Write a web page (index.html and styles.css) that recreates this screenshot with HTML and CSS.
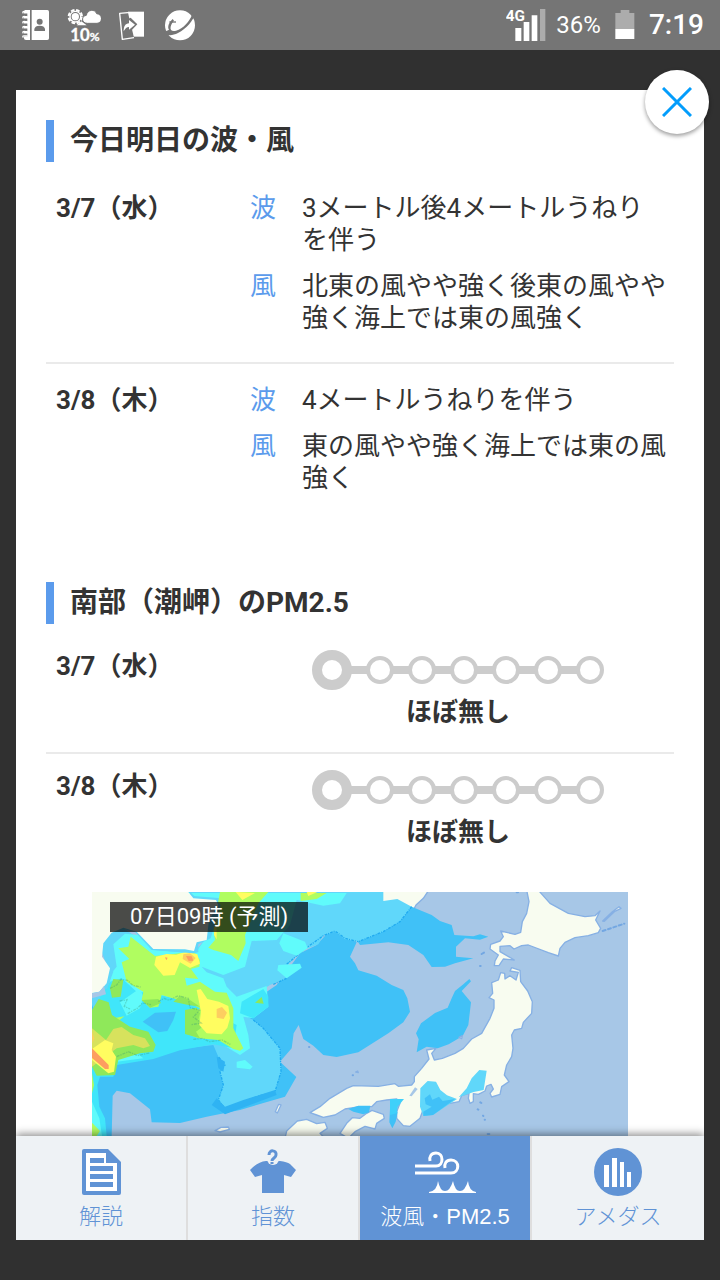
FILE: index.html
```html
<!DOCTYPE html>
<html lang="ja">
<head>
    <meta charset="UTF-8">
    <meta name="viewport" content="width=device-width, initial-scale=1.0">
    <title>波風・PM2.5</title>
    <link rel="stylesheet" href="styles.css">
</head>
<body>
  <header class="status-bar">
    <svg class="w28" viewBox="63 0 84 150" aria-hidden="true">
      <path fill="#fff" d="M78 30h12v90H78c-4 0-6-2-6-6V36c0-4 2-6 6-6zM95 30h47q5 0 5 5v80q0 5-5 5H95z"/>
      <path fill="none" stroke="#757575" stroke-width="9" d="M68 45h14M68 60h14M68 75h14M68 90h14M68 105h14"/>
      <path fill="none" stroke="#fff" stroke-width="4" d="M70 40q-5-7 6-5h7M70 55q-5-7 6-5h7M70 70q-5-7 6-5h7M70 85q-5-7 6-5h7M70 100q-5-7 6-5h7M70 113q-5-7 6-5h7"/>
      <circle cx="119" cy="65" r="9" fill="#757575"/>
      <path fill="#757575" d="M103 93v-6q2-10 16-10t16 10v6z"/>
    </svg>
    <svg class="w34" viewBox="201 0 102 150" aria-hidden="true">
      <circle cx="226" cy="50" r="20" fill="none" stroke="#fff" stroke-width="6" stroke-dasharray="11 5"/>
      <circle cx="226" cy="50" r="16" fill="none" stroke="#fff" stroke-width="4"/>
      <circle cx="226" cy="50" r="11" fill="#fff"/>
      <path fill="#fff" stroke="#757575" stroke-width="3" d="M262 70c-18 0-19-22-3-24 3-18 26-20 31-5 19 1 19 28 1 29z"/>
      <path fill="#fff" d="M230 76l14-12 16 12z"/>
      <text class="rain" x="211" y="124">10<tspan class="rain-unit">%</tspan></text>
    </svg>
    <svg class="w26" viewBox="357 0 78 150" aria-hidden="true">
      <path fill="#fff" d="M384 35h48v75h-48z"/>
      <path fill="#757575" stroke="#fff" stroke-width="4" stroke-linejoin="round" d="M384 38l-25 2 8 78 35-5"/>
      <path fill="#757575" d="M384 57l8-4 20 20-20 21-8-4z"/>
      <path fill="#fff" d="M371 94c0-15 5-23 16-24V60l18 14-18 15v-8c-7 0-11 4-16 13z"/>
    </svg>
    <svg class="w34" viewBox="489 0 102 150" aria-hidden="true">
      <circle cx="540" cy="76" r="45" fill="#fff"/>
      <path fill="#757575" d="M491 92c6 17 24 16 43 7 26-13 46-37 52-59l-7-6c-5 23-21 45-43 55-16 7-27 4-24-9 2-8 5-13 10-18l-4-5c-10 9-17 23-11 32-6 4-12 6-16 3z"/>
      <path fill="none" stroke="#757575" stroke-width="4" d="M508 66h20"/>
    </svg>
    <span class="spacer"></span>
    <svg class="w40 signal" viewBox="86 0 120 150" role="img" aria-label="4G">
      <path fill="#fff" d="M114 84h18v39h-18zM139 66h17v57h-17zM163 46h17v77h-17z"/>
      <path fill="#acacac" d="M188 27h16v96h-16z"/>
      <text class="network" x="85" y="62">4G</text>
    </svg>
    <span class="percent">36%</span>
    <svg class="w20 battery" viewBox="407 0 60 150" aria-hidden="true">
      <path fill="#acacac" d="M424 30h26v9h15v49h-57V39h16z"/>
      <path fill="#fff" d="M408 87h57v30h-57z"/>
    </svg>
    <time class="clock">7:19</time>
  </header>

  <div class="overlay">
    <button class="close" type="button" aria-label="閉じる">
      <svg viewBox="0 0 30 30" aria-hidden="true"><path d="M1 1l28 28M29 1L1 29"/></svg>
    </button>
    <div class="sheet">
      <main class="content">
        <section class="forecast">
          <h2>今日明日の波・風</h2>
          <div class="day">
            <h3>3/7（水）</h3>
            <dl>
              <dt>波</dt>
              <dd>3メートル後4メートルうねりを伴う</dd>
              <dt>風</dt>
              <dd>北東の風やや強く後東の風やや強く海上では東の風強く</dd>
            </dl>
          </div>
          <div class="day">
            <h3>3/8（木）</h3>
            <dl>
              <dt>波</dt>
              <dd>4メートルうねりを伴う</dd>
              <dt>風</dt>
              <dd>東の風やや強く海上では東の風強く</dd>
            </dl>
          </div>
        </section>

        <section class="pm">
          <h2>南部（潮岬）のPM2.5</h2>
          <div class="pm-day">
            <h3>3/7（水）</h3>
            <div class="level">
              <div class="scale"><i class="on"></i><i></i><i></i><i></i><i></i><i></i><i></i></div>
              <p>ほぼ無し</p>
            </div>
          </div>
          <div class="pm-day">
            <h3>3/8（木）</h3>
            <div class="level">
              <div class="scale"><i class="on"></i><i></i><i></i><i></i><i></i><i></i><i></i></div>
              <p>ほぼ無し</p>
            </div>
          </div>
        </section>

        <figure class="map">
          <figcaption>07日09時 (予測)</figcaption>
          <svg viewBox="6 21 1608 1200" aria-hidden="true">
            <path fill="#a7c7e7" d="M6 21h1608v1200H6z"/>
            <path class="land" d="M840 10H1020L1000 40 978 60 965 85 860 80z"/>
            <!-- sea of japan and yellow sea -->
            <path fill="#40c1f7" d="M0 325L60 300 300 330 450 375 560 300 630 205 680 180 712 145 740 135 755 155 785 165 800 172 780 215 795 235 805 256 860 272 905 300 940 315 952 340 960 380 940 412 895 445 805 502 740 516 700 510 670 482 640 462 626 420 611 445 605 490 570 530 619 576 585 635 450 675 350 695 270 714 185 712 180 673 120 625 80 617 68 632 65 753H0z"/>
            <path fill="#40c1f7" d="M965 65L1025 90 1050 108 1085 120 1093 150 1150 154 1170 148 1195 155 1170 164 1125 160 1098 185V215L1150 220 1095 235 1065 245 1025 246 1000 210 955 180 895 172 810 180 800 165z"/>
            <path fill="#40c1f7" d="M1095 318L1120 298 1138 282 1143 289 1115 318 1143 352 1135 420 1118 453 1076 478 1043 490 1010 485 980 502 986 463 978 445 993 415 1035 384 1073 368 1085 340z"/>
            <!-- light blue -->
            <path fill="#60d7fa" d="M290 15H880V48L922 42 965 65 930 110 880 140 805 170 765 163 735 140 700 152 685 178 640 195 595 238 590 280 540 300 470 345 445 380 490 405 520 430 570 490 573 560 555 620 500 635 460 650 405 670 385 645 400 600 390 560 405 540 385 515 370 480 200 500 80 520 6 360V325L60 300 40 180 100 130 190 190 315 200 355 150z"/>
            <path fill="none" stroke="#20aaf0" stroke-width="4" stroke-dasharray="8 3 3 4" d="M445 375L455 345 510 322M550 298L590 280M590 238L640 195 700 152 735 138 765 160 805 170M965 65L930 110 880 140 805 170M490 405L520 430 570 490 573 560 555 620 500 635 460 650 405 670 385 645 400 600 390 560 405 540 385 515"/>
            <path fill="#2fb3f3" d="M555 615L560 630 480 660 405 688 365 660 380 640 405 665 460 645zM380 515L405 530 400 560 385 550z"/>
            <!-- cyan -->
            <path fill="#60fbfb" d="M70 178L105 146 145 150 195 195 315 205 355 150 395 40 300 32 295 24H770L750 55 700 62 620 45 600 120 560 165 485 168 465 245 400 270 335 245 350 262 400 280 410 305 440 335 530 303 535 365 490 400 460 395 475 450 480 490 450 510 400 480 300 440 200 330 110 390 90 360 130 320 60 300 60 270 80 245z"/>
            <path fill="#60fbfb" d="M580 145L645 170 653 190 620 212 580 198 568 175zM565 240L630 236 635 248 590 280 562 256zM440 530L465 525 488 545 480 553 440 548z"/>
            <path fill="#40e6fa" d="M6 375L60 290 95 280 140 320 190 325 310 355 400 400 440 420 430 490 370 478 270 496 190 522 80 540 70 575 30 575 22 600 28 665 45 700 50 753H6z"/>
            <path fill="#60fbfb" d="M90 352L150 310 160 335 150 370 110 392zM6 650L28 700 36 753H6zM78 520L145 508 160 520 120 525 80 530z"/>
            <path fill="#40e6fa" d="M455 350L520 312 535 335 535 365 490 400 450 385z"/>
            <path fill="#40c1f7" d="M158 410L195 383 258 380 250 405 232 438 205 442z"/>
            <!-- green -->
            <path fill="#b0fd60" d="M122 155L195 213 270 205 315 205 330 225 328 245 303 252 325 282 285 278 290 302 330 290 375 320 410 323 430 370 430 430 460 490 450 497 430 492 385 465 325 460 285 445 290 400 330 370 300 355 215 330 205 365 180 368 155 345 160 320 110 290 95 232 118 222 85 190 115 185z"/>
            <path fill="#b0fd60" d="M390 21H535L505 55 465 150 467 175 445 228 423 210 370 195 355 188 375 165 370 130zM632 24H710L680 42 632 48zM70 400L103 394 85 408zM6 565L12 600 6 625zM6 713L30 738 20 753H6z"/>
            <path fill="#8fe85a" d="M6 375L26 342 56 352 66 390 120 425 175 440 197 480 190 500 150 505 85 525 75 570 20 572 6 545zM70 282L100 285 92 335 66 338 60 310zM495 353L515 336 521 356zM155 345L205 342 213 354 180 368zM285 375L320 368 330 385 325 405 345 420 318 440 330 460 285 447z"/>
            <path fill="#8fe85a" d="M250 350L270 332 300 345 330 365 295 360z"/>
            <!-- yellow, orange, red -->
            <path fill="#d7e25d" d="M6 430L48 465 70 432 95 426 130 450 165 460 180 483 160 490 130 480 80 490 6 545z"/>
            <path fill="#fffd60" d="M198 215L230 207 258 209 288 200 322 208 330 236 300 249 270 232 254 270 220 272 193 240zM320 315L332 312 352 342 387 350 415 363 420 400 412 428 395 448 350 445 328 420 333 380zM437 21L457 45 495 24zM374 80H380V163L372 150zM650 21H682L655 33zM6 492L45 465 70 475 65 495 78 515 72 560 55 565 6 525z"/>
            <path fill="#fdce60" d="M280 208L300 205 317 219 302 236 278 222zM380 372L396 366 411 383 401 402 380 398zM6 440L13 460 8 475z"/>
            <path fill="#fd9e60" d="M288 213L305 214 310 227 296 228zM6 490L56 540V552H45L6 519zM225 217L233 218 229 226z"/>
            <path class="grain" d="M60 310L80 300 93 283 113 286 128 301 152 306M89 348L111 344 103 364 120 372M113 386L143 369 158 354 183 359M205 350L222 340 237 346 265 332 295 340 300 368 329 376 310 396 334 414 304 419M310 463L338 460 358 470 396 465 421 478M80 515L115 500 143 512 178 504"/>
            <!-- inland area without data -->
            <path fill="#60d7fa" d="M300 21L320 40 380 48 392 60 362 160 325 178V202L310 205 185 195 135 140 100 132 72 160 52 185 55 230 70 260 52 310 6 340V320L40 300 50 240 35 200V170L80 120 300 120z"/>
            <path fill="#f8fcf0" d="M0 15H290L310 40 378 45 385 60 357 105 350 165 320 172 312 198 285 193 190 192 140 140 100 128 65 143 40 175 36 215 60 250 50 295 28 320 0 325z"/>
            <path fill="#a7c7e7" d="M28 320L42 303 48 328 6 340V325z"/>
            <!-- japan -->
            <path class="land" d="M585 760L590 738 622 708 650 703 680 716 705 712 712 730 690 745 705 760zM750 745L770 715 787 698 810 700 830 685 846 676 880 688 883 700 860 715 855 732 825 724 795 740 775 760zM375 737L393 727 415 726 418 733 390 741zM556 680L566 658 573 660 562 684zM797 561L803 558 805 563z"/>
            <g transform="translate(795 0)">
              <path class="land" d="M514 10H545L585 55 640 85 690 95 720 92 735 78 722 105 737 130 730 143 700 152 660 158 630 172 615 190 610 213 580 203 520 180 500 182 477 192 465 182 435 184V200L478 225 445 222 432 242H418L420 228 430 210 405 192 407 178 435 168 445 155 437 138 480 148 497 142 502 110 515 85 522 50z"/>
              <path class="land" d="M437 263L449 265 450 282 465 272 483 285 490 262 465 258 470 248 495 256 497 290 518 318 532 350 530 385 505 412 500 430 478 435 470 450 474 490 470 515 455 540 448 570 462 590 440 605 435 628 410 636 405 625 415 612 408 598 395 603 390 618 370 628 355 626V650L345 655 340 640 342 625 320 632 312 650 285 655 240 660 205 672 195 700 165 724 145 722 125 700V680L135 655 125 642 95 645 65 650 50 665 15 665-30 672-60 690-95 697-115 690-135 683-105 665-75 640-25 610-5 602 70 604 120 596 130 604 170 600 178 590V575L200 550 222 522 215 495 243 490 230 505 238 525 262 520 300 505 325 490 350 462 380 445 405 400 417 370V345L402 338 413 325 410 293 430 285z"/>
              <path class="land" d="M743 108L772 80 792 65 798 70 778 80 748 109zM312 457L322 452 320 461z"/>
              <path fill="#a7c7e7" d="M163 632L180 607 188 612 170 634z"/>
              <path fill="#60d7fa" d="M196 610L218 588 243 590 256 615 276 631 306 642 234 690 205 693 195 665zM395 557L386 615 356 621 311 637 335 610 350 580 373 555z"/>
              <path fill="#40c1f7" d="M209 640L225 628 232 644 252 635 263 648 282 645 300 642 234 690 205 693V680L230 665 212 658zM105 670L128 680 122 710 112 730 103 712zM-20 672L10 662H46L42 682 25 688-5 680z"/>
              <path fill="#40d0fa" d="M105 642H147L128 665 125 685 105 690z"/>
              <path class="islands" d="M380 207l7-4M375 243h2M376 652l3 2M368 673l2 1M384 692l1 1M389 704h1M485 22h4M743 138l65-22M398 747h5M-7 571h1M-138 486h1"/>
            </g>
          </svg>
        </figure>
      </main>

      <nav class="tabs">
        <a href="#comment">
          <svg viewBox="0 0 48 48" aria-hidden="true">
            <path fill="#6093d5" d="M7 1h24l13 13v31q0 2-2 2H7q-2 0-2-2V3q0-2 2-2z"/>
            <path fill="#fff" d="M9 5h20v10h11v28H9z"/>
            <path fill="#6093d5" d="M13 10h14v5H13zM13 18h23v5H13zM13 26h23v5H13zM13 34h23v5H13zM29 4l11 11h-9q-2 0-2-2z"/>
          </svg>
          <span>解説</span>
        </a>
        <a href="#index">
          <svg viewBox="0 0 48 48" aria-hidden="true">
            <path fill="#6093d5" d="M17 13h14q7 1 10 3l6 6-5 7-7-2v18H13V27l-7 2-5-7q7-8 16-9z"/>
            <circle cx="24" cy="11" r="6" fill="#eef2f5"/>
            <path fill="none" stroke="#6093d5" stroke-width="3" d="M20 7c0-6 8-5 7 0 0 3-4 3-4 6M23 14v2"/>
          </svg>
          <span>指数</span>
        </a>
        <a class="active" href="#wave" aria-current="page">
          <svg class="wave" viewBox="0 0 64 48" aria-hidden="true">
            <path fill="none" stroke="#fff" stroke-width="3" d="M2 18h21c8 0 8-13 0-13-5 0-7 4-6 8M2 25h36c9 0 9-13 0-13-5 0-7 4-6 8"/>
            <path fill="#fff" d="M16 44q8-1 9-11 2 10 7 10t8-10q2 10 7 10t8-10q1 10 8 11v1H16z"/>
          </svg>
          <span>波風・PM2.5</span>
        </a>
        <a href="#amedas">
          <svg viewBox="0 0 48 48" aria-hidden="true">
            <circle cx="24" cy="24" r="24" fill="#6093d5"/>
            <path fill="#fff" d="M10 17h5v22h-5zM18 10h5v29h-5zM26 14h4v25h-4zM33 24h4v15h-4z"/>
          </svg>
          <span>アメダス</span>
        </a>
      </nav>
    </div>
  </div>
</body>
</html>
```

FILE: styles.css
```css
* {
  box-sizing: border-box;
}
body {
  display: flex;
  flex-direction: column;
  height: 100vh;
  margin: 0;
  background-color: #303030;
  color: #333;
  font-family: Roboto, "Noto Sans CJK JP", sans-serif;
  font-size: 26px;
  line-height: 32px;
}
h2, h3, p, dl, dd, figure {
  margin: 0;
}
svg {
  display: block;
}

/* status bar */
.status-bar {
  display: flex;
  align-items: center;
  gap: 18px;
  height: 50px;
  padding: 0 16px 0 21px;
  background-color: #757575;
  color: #fff;
}
.status-bar svg {
  flex: none;
  height: 50px;
}
.w20 { width: 20px; }
.w26 { width: 26px; }
.w28 { width: 28px; }
.w34 { width: 34px; }
.w40 { width: 40px; }
.spacer {
  flex: 1;
}
.rain {
  fill: #fff;
  stroke: #fff;
  stroke-width: 1px;
  font: bold 50px Lato, sans-serif;
}
.rain-unit {
  font-size: 36px;
}
.network {
  fill: #fff;
  stroke: #757575;
  stroke-width: 6px;
  paint-order: stroke;
  font: bold 46px Roboto, sans-serif;
}
.signal {
  margin-right: -8px;
}
.battery {
  margin: 0 -4px;
}
.percent {
  font-size: 24px;
}
.clock {
  font-size: 28px;
  font-weight: 500;
}

/* sheet */
.overlay {
  position: relative;
  flex: 1;
  min-height: 0;
  padding: 40px 16px;
}
.sheet {
  display: flex;
  flex-direction: column;
  height: 100%;
  background-color: #fff;
}
.content {
  flex: 1;
  min-height: 0;
  padding: 30px 30px 0;
  overflow-y: auto;
  scrollbar-width: none;
}
.close {
  position: absolute;
  top: 20px;
  right: 11px;
  z-index: 2;
  display: flex;
  align-items: center;
  justify-content: center;
  width: 64px;
  height: 64px;
  padding: 0;
  border: none;
  border-radius: 50%;
  background-color: #fff;
  box-shadow: 0 2px 4px rgba(0, 0, 0, 0.4);
  cursor: pointer;
}
.close svg {
  width: 30px;
  height: 30px;
  fill: none;
  stroke: #039dfc;
  stroke-width: 3;
}

h2 {
  padding-left: 16px;
  border-left: 8px solid #5b9bec;
  font-size: 28px;
  font-weight: bold;
  line-height: 42px;
}
h3 {
  font-size: 26px;
  font-weight: bold;
  line-height: 32px;
}

/* wave and wind */
.day {
  display: grid;
  grid-template-columns: 194px 1fr;
  padding: 20px 8px 28px 10px;
}
.day:nth-of-type(1) {
  padding-top: 30px;
}
.day + .day,
.pm-day + .pm-day {
  border-top: 2px solid #eaeaea;
}
dl {
  display: grid;
  grid-template-columns: 52px 1fr;
  row-gap: 14px;
}
dt {
  color: #5b9bec;
}

/* pm2.5 */
.pm {
  padding-top: 60px;
}
.pm-day {
  display: grid;
  grid-template-columns: 194px 1fr;
  padding: 16px 8px 24px 10px;
}
.pm-day:nth-of-type(1) {
  padding-top: 26px;
}
.level {
  display: flex;
  flex-direction: column;
  align-items: center;
  gap: 6px;
  font-weight: bold;
}
.scale {
  display: flex;
  align-items: center;
  gap: 14px;
  background: linear-gradient(#ccc, #ccc) center / 250px 8px no-repeat;
}
.scale i {
  width: 28px;
  height: 28px;
  border: 4px solid #ccc;
  border-radius: 50%;
  background-color: #fff;
}
.scale .on {
  width: 40px;
  height: 40px;
  border-width: 10px;
}

/* distribution map */
.map {
  position: relative;
  margin: 20px 46px 0;
}
.map svg {
  width: 100%;
}
.map figcaption {
  position: absolute;
  top: 10px;
  left: 18px;
  padding: 0 20px;
  background-color: rgba(0, 0, 0, 0.7);
  color: #fff;
  font-size: 22px;
  line-height: 30px;
}
.land {
  fill: #f8fcf0;
  stroke: #86b0e4;
  stroke-width: 4;
  stroke-linejoin: round;
}
.islands {
  fill: none;
  stroke: #73a7e2;
  stroke-width: 6;
  stroke-linecap: round;
  stroke-dasharray: 9 8;
}
.grain {
  fill: none;
  stroke: #3c9b78;
  stroke-opacity: 0.35;
  stroke-width: 4;
  stroke-dasharray: 9 3 4 3;
}

/* bottom tabs */
.tabs {
  position: relative;
  display: grid;
  grid-template-columns: repeat(4, 1fr);
  box-shadow: 0 -2px 8px rgba(0, 0, 0, 0.45);
  clip-path: inset(-12px 0 0);
}
.tabs a {
  display: flex;
  flex-direction: column;
  align-items: center;
  gap: 6px;
  height: 104px;
  padding-top: 12px;
  border-right: 2px solid #dedede;
  background-color: #eef2f5;
  color: #6093d5;
  font-family: "Liberation Sans", "Noto Sans CJK JP", sans-serif;
  font-size: 22px;
  font-weight: 300;
  line-height: 30px;
  text-decoration: none;
  white-space: nowrap;
}
.tabs a:last-child {
  border-right: none;
}
.tabs svg {
  width: 48px;
  height: 48px;
}
.tabs .wave {
  width: 64px;
}
.tabs .active {
  background: #6093d5 padding-box;
  color: #fff;
}
```
